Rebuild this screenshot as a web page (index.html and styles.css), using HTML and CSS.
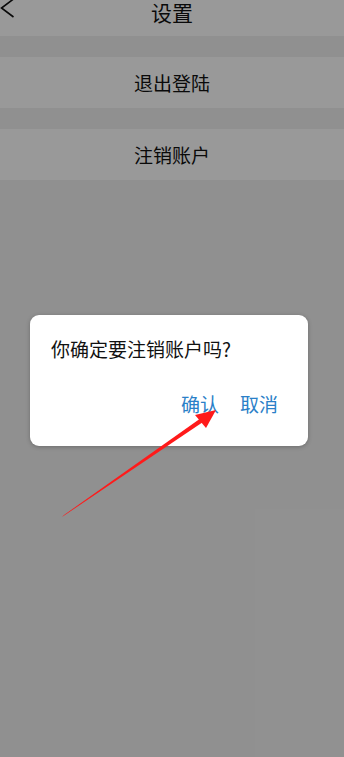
FILE: index.html
```
<!DOCTYPE html>
<html lang="zh-CN">
<head>
  <meta charset="UTF-8">
  <meta name="viewport" content="width=device-width, initial-scale=1.0">
  <title>设置</title>
  <link rel="stylesheet" href="styles.css">
</head>
<body>
  <div class="page">
    <div class="header">
      <svg class="back" width="16" height="20" viewBox="0 0 16 20">
        <path d="M13.5 -1 L1.5 8 L13.5 17" fill="none" stroke="#111" stroke-width="1.6"/>
      </svg>
      <div class="title">设置</div>
    </div>
    <div class="list">
      <div class="item">退出登陆</div>
      <div class="item">注销账户</div>
    </div>
  </div>

  <!-- 遮罩和弹窗 -->
  <div class="mask">
    <div class="dialog">
      <p class="dialog-text">你确定要注销账户吗?</p>
      <div class="dialog-actions">
        <span class="action">确认</span>
        <span class="action">取消</span>
      </div>
    </div>
  </div>

  <svg class="arrow" width="344" height="757" viewBox="0 0 344 757">
    <polygon points="62,517 203,422 201,418 64,515" fill="#ff1a1a"/>
    <polygon points="216,410 195,415 206,428" fill="#ff1a1a"/>
  </svg>
</body>
</html>
```

FILE: styles.css
```
* {
  margin: 0;
  padding: 0;
  box-sizing: border-box;
}

body {
  font-family: "Noto Sans CJK SC", "Noto Sans", sans-serif;
  background-color: #f1f1f1;
  width: 344px;
  height: 757px;
  overflow: hidden;
  position: relative;
}

.header {
  height: 36px;
  background-color: #fff;
  position: relative;
  display: flex;
  justify-content: center;
}

.back {
  position: absolute;
  left: 0;
  top: 0;
}

.title {
  font-size: 21px;
  line-height: 25px;
  color: #111;
}

.list {
  padding-top: 21px;
  display: flex;
  flex-direction: column;
  gap: 21px;
}

.item {
  height: 51px;
  background-color: #fff;
  font-size: 19px;
  color: #111;
  display: flex;
  align-items: center;
  justify-content: center;
}

/* 遮罩 */
.mask {
  position: absolute;
  inset: 0;
  background-color: rgba(0, 0, 0, 0.4);
  display: flex;
  justify-content: center;
  padding-top: 315px;
}

.dialog {
  width: 278px;
  height: 131px;
  margin-left: -6px;
  background-color: #fff;
  border-radius: 9px;
  box-shadow: 0 1px 4px rgba(0, 0, 0, 0.25);
  padding: 21px 30px 0 21px;
}

.dialog-text {
  font-size: 19px;
  line-height: 26px;
  color: #111;
}

.dialog-actions {
  margin-top: 30px;
  display: flex;
  justify-content: flex-end;
  gap: 21px;
}

.action {
  font-size: 19px;
  line-height: 24px;
  color: #2a80c8;
}

.arrow {
  position: absolute;
  left: 0;
  top: 0;
}
```
